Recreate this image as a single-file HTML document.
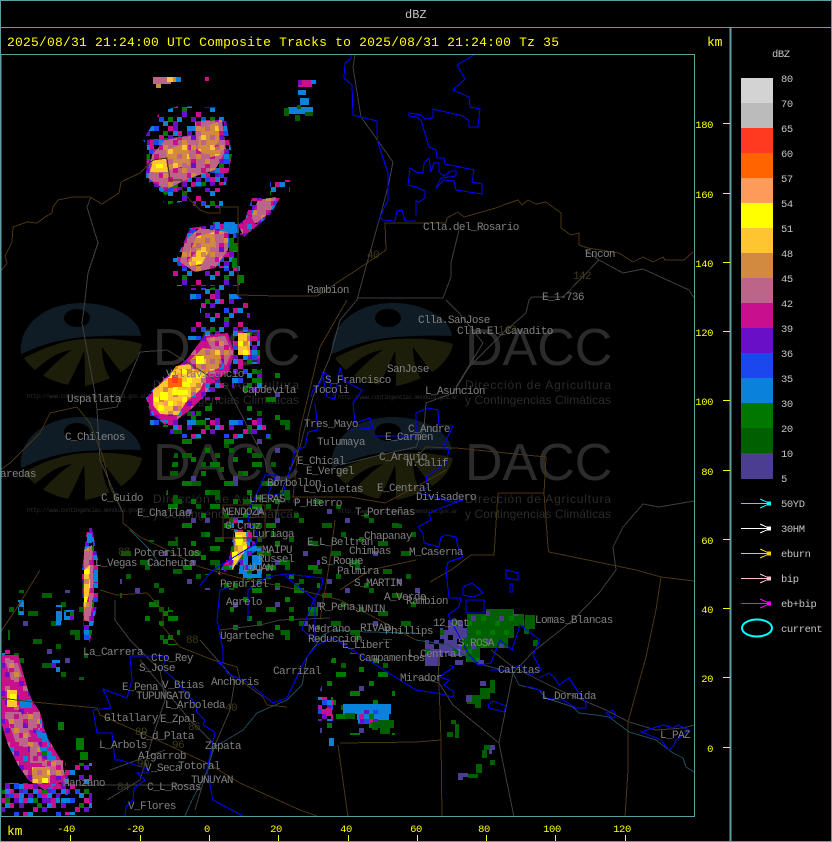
<!DOCTYPE html>
<html><head><meta charset="utf-8"><title>dBZ</title>
<style>
html,body{margin:0;padding:0;background:#000;width:832px;height:842px;overflow:hidden}
svg{display:block}
text{font-family:"Liberation Mono",monospace;font-size:11px;letter-spacing:-.62px}
.m text{fill:#808080}
.d text{fill:#3f3a1c}
.y text{fill:#ff0;font-size:10.5px;letter-spacing:-.4px}
.g text{fill:#c4c4c4;font-size:10.5px;letter-spacing:-.4px}
.w text{fill:#2b2b2b;font-family:"Liberation Sans",sans-serif;letter-spacing:0}
.u text{fill:#2b2b2b;font-size:6px;letter-spacing:0}
.t text{fill:#ff0;font-size:13px;letter-spacing:0}
.e *{shape-rendering:crispEdges}
</style></head><body>
<svg xmlns="http://www.w3.org/2000/svg" width="832" height="842" viewBox="0 0 832 842">
<defs>
<clipPath id="pl"><rect x="1" y="55" width="693" height="761"/></clipPath>
<pattern id="pC" patternUnits="userSpaceOnUse" width="28" height="28"><path fill="#c8108c" d="M0 0h5v5h-5zM23 0h5v5h-5zM9 5h5v5h-5zM14 9h5v5h-5zM23 14h5v5h-5zM5 19h5v5h-5zM14 23h5v5h-5z"/><path fill="#6a0fc8" d="M5 0h5v5h-5zM19 5h5v5h-5zM0 9h5v5h-5zM14 14h5v5h-5zM9 19h5v5h-5zM23 19h5v5h-5zM5 23h5v5h-5z"/><path fill="#1c46ee" d="M14 0h5v5h-5zM23 5h5v5h-5zM9 9h5v5h-5zM0 19h5v5h-5z"/><path fill="#0a82dc" d="M19 0h5v5h-5zM5 5h5v5h-5zM19 9h5v5h-5zM0 14h5v5h-5zM19 19h5v5h-5zM9 23h5v5h-5z"/><path fill="#007800" d="M5 14h5v5h-5zM23 23h5v5h-5z"/></pattern>
<pattern id="pF" patternUnits="userSpaceOnUse" width="42" height="42"><path fill="#c8108c" d="M0 0h5v5h-5zM9 5h5v5h-5zM33 9h5v5h-5zM23 14h5v5h-5zM5 19h5v5h-5zM28 28h5v5h-5z"/><path fill="#6a0fc8" d="M5 0h5v5h-5zM19 5h5v5h-5zM0 9h5v5h-5zM37 19h5v5h-5zM14 28h5v5h-5zM23 33h5v5h-5zM5 37h5v5h-5z"/><path fill="#1c46ee" d="M28 0h5v5h-5zM14 14h5v5h-5zM33 33h5v5h-5z"/><path fill="#0a82dc" d="M19 0h5v5h-5zM23 0h5v5h-5zM5 5h5v5h-5zM28 14h5v5h-5zM0 23h5v5h-5zM19 19h5v5h-5zM9 33h5v5h-5zM37 37h5v5h-5z"/><path fill="#007800" d="M37 5h5v5h-5zM14 23h5v5h-5zM0 33h5v5h-5z"/></pattern>
<pattern id="pB" patternUnits="userSpaceOnUse" width="28" height="28"><rect width="28" height="28" fill="#bb6688"/><path fill="#c8108c" d="M5 0h5v5h-5zM19 5h5v5h-5zM0 9h5v5h-5zM14 14h5v5h-5zM23 19h5v5h-5zM9 23h5v5h-5z"/><path fill="#d18a3e" d="M14 0h5v5h-5zM0 14h5v5h-5zM9 19h5v5h-5zM23 5h5v5h-5z"/><path fill="#6a0fc8" d="M23 23h5v5h-5z"/></pattern>
<pattern id="pM" patternUnits="userSpaceOnUse" width="28" height="28"><rect width="28" height="28" fill="#c8108c"/><path fill="#6a0fc8" d="M5 0h5v5h-5zM19 9h5v5h-5zM0 19h5v5h-5zM14 23h5v5h-5z"/><path fill="#bb6688" d="M14 5h5v5h-5zM5 14h5v5h-5zM23 14h5v5h-5zM9 23h5v5h-5z"/><path fill="#0a82dc" d="M23 0h5v5h-5zM9 19h5v5h-5z"/></pattern>
<pattern id="pA" patternUnits="userSpaceOnUse" width="28" height="28"><rect width="28" height="28" fill="#fdc530"/><path fill="#d18a3e" d="M5 0h5v5h-5zM19 5h5v5h-5zM9 14h5v5h-5zM0 19h5v5h-5zM23 23h5v5h-5z"/><path fill="#ff0" d="M14 5h5v5h-5zM0 9h5v5h-5zM19 14h5v5h-5zM5 23h5v5h-5z"/><path fill="#ff9b5a" d="M9 9h5v5h-5zM23 9h5v5h-5zM14 19h5v5h-5z"/><path fill="#bb6688" d="M23 0h5v5h-5zM5 14h5v5h-5z"/></pattern>
<pattern id="pO" patternUnits="userSpaceOnUse" width="28" height="28"><rect width="28" height="28" fill="#d18a3e"/><path fill="#bb6688" d="M5 0h5v5h-5zM19 5h5v5h-5zM9 14h5v5h-5zM0 19h5v5h-5zM23 23h5v5h-5zM14 23h5v5h-5z"/><path fill="#fdc530" d="M14 5h5v5h-5zM0 9h5v5h-5zM19 14h5v5h-5zM5 23h5v5h-5z"/><path fill="#c8108c" d="M23 0h5v5h-5z"/></pattern>
<pattern id="pL" patternUnits="userSpaceOnUse" width="28" height="28"><path fill="#0a82dc" d="M0 0h5v5h-5zM5 0h5v5h-5zM9 0h5v5h-5zM19 0h5v5h-5zM0 5h5v5h-5zM9 5h5v5h-5zM14 5h5v5h-5zM23 5h5v5h-5zM5 9h5v5h-5zM14 9h5v5h-5zM19 9h5v5h-5zM0 14h5v5h-5zM5 14h5v5h-5zM19 14h5v5h-5zM23 14h5v5h-5zM9 19h5v5h-5zM14 19h5v5h-5zM0 23h5v5h-5zM5 23h5v5h-5zM19 23h5v5h-5z"/><path fill="#6a0fc8" d="M14 0h5v5h-5zM19 5h5v5h-5zM9 14h5v5h-5zM23 19h5v5h-5z"/><path fill="#007800" d="M23 9h5v5h-5zM5 19h5v5h-5zM14 23h5v5h-5z"/></pattern>
<pattern id="pG" patternUnits="userSpaceOnUse" width="28" height="28"><path fill="#007800" d="M0 0h5v5h-5zM5 0h5v5h-5zM19 5h5v5h-5zM9 14h5v5h-5zM14 14h5v5h-5zM0 19h5v5h-5zM23 23h5v5h-5z"/><path fill="#005f00" d="M14 9h5v5h-5zM19 19h5v5h-5z"/></pattern>
<pattern id="pS" patternUnits="userSpaceOnUse" width="42" height="42"><path fill="#007800" d="M0 0h5v5h-5zM5 0h5v5h-5zM33 9h5v5h-5zM14 19h5v5h-5zM19 19h5v5h-5zM37 28h5v5h-5zM23 37h5v5h-5z"/><path fill="#005f00" d="M5 33h5v5h-5z"/><path fill="#4b3d8f" d="M23 14h5v5h-5z"/></pattern>
<pattern id="pT" patternUnits="userSpaceOnUse" width="70" height="70"><path fill="#005f00" d="M0 0h5v5h-5zM5 0h5v5h-5zM5 5h5v5h-5zM33 9h5v5h-5zM37 9h5v5h-5zM56 14h5v5h-5zM14 23h5v5h-5zM19 28h5v5h-5zM42 33h5v5h-5zM47 33h5v5h-5zM61 42h5v5h-5zM9 47h5v5h-5zM28 51h5v5h-5zM33 51h5v5h-5zM51 61h5v5h-5zM56 61h5v5h-5z"/><path fill="#4b3d8f" d="M65 28h5v5h-5zM23 61h5v5h-5zM47 19h5v5h-5z"/></pattern>
<pattern id="pD" patternUnits="userSpaceOnUse" width="28" height="28"><rect width="28" height="28" fill="#005f00"/><path fill="#007800" d="M5 0h5v5h-5zM19 5h5v5h-5zM0 14h5v5h-5zM14 14h5v5h-5z"/><path fill="#4b3d8f" d="M23 0h5v5h-5zM9 23h5v5h-5z"/></pattern>
<pattern id="pV" patternUnits="userSpaceOnUse" width="28" height="28"><rect width="28" height="28" fill="#4b3d8f"/><path fill="#005f00" d="M5 5h5v5h-5zM19 14h5v5h-5z"/><path fill="#000" d="M14 0h5v5h-5zM23 9h5v5h-5zM9 23h5v5h-5zM0 19h5v5h-5zM19 23h5v5h-5z"/></pattern>
<g id="logo"><path fill="#0f1b25" d="M21 354C18 325 45 303 82 303C115 303 140 320 141 336C120 335 100 336 85 337C60 339 40 345 24 353Z"/><ellipse cx="77" cy="318" rx="13" ry="9" fill="#000"/><path fill="#1d1e0a" d="M24 358C45 347 65 340 85 339C105 338 125 339 142 344C138 365 115 380 85 386C60 387 35 375 24 358Z"/><path fill="#000" d="M35 370C45 362 55 352 72 350C60 358 50 368 42 377ZM84 351C78 365 72 378 66 388L85 388C85 372 85 360 84 351ZM102 347C102 365 108 378 115 384L125 377C115 365 108 355 102 347Z"/></g>
</defs>

<g class="w" clip-path="url(#pl)">
<use href="#logo"/><use href="#logo" x="311"/><use href="#logo" y="114"/><use href="#logo" x="311" y="114"/>
<text x="153" y="365" style="font-size:52px">DACC</text>
<text x="465" y="365" style="font-size:52px">DACC</text>
<text x="153" y="480" style="font-size:52px">DACC</text>
<text x="465" y="480" style="font-size:52px">DACC</text>
<text x="153" y="389" textLength="146" style="font-size:12px">Dirección de Agricultura</text>
<text x="153" y="404" textLength="146" style="font-size:12px">y Contingencias Climáticas</text>
<text x="465" y="389" textLength="146" style="font-size:12px">Dirección de Agricultura</text>
<text x="465" y="404" textLength="146" style="font-size:12px">y Contingencias Climáticas</text>
<text x="153" y="503" textLength="146" style="font-size:12px">Dirección de Agricultura</text>
<text x="153" y="518" textLength="146" style="font-size:12px">y Contingencias Climáticas</text>
<text x="465" y="503" textLength="146" style="font-size:12px">Dirección de Agricultura</text>
<text x="465" y="518" textLength="146" style="font-size:12px">y Contingencias Climáticas</text>
</g>
<g class="u">
<text x="27" y="398" textLength="120">http://www.contingencias.mendoza.gov.ar</text>
<text x="338" y="399" textLength="120">http://www.contingencias.mendoza.gov.ar</text>
<text x="27" y="512" textLength="120">http://www.contingencias.mendoza.gov.ar</text>
<text x="338" y="513" textLength="120">http://www.contingencias.mendoza.gov.ar</text>
</g>

<g class="e" clip-path="url(#pl)">
<!-- sparse echoes -->
<path fill="url(#pT)" d="M170 420h120v170h-120z"/>
<path fill="url(#pS)" d="M180 425L240 425L280 470V575H185L165 500Z"/>
<path fill="url(#pF)" d="M200 290L225 285L250 305V335H200ZM170 418h100v20h-100zM232 362h30v30h-30z"/>
<path fill="url(#pS)" d="M240 370h45v50h-45z"/>
<path fill="url(#pG)" d="M186 403h26v22h-26z"/>
<path fill="url(#pT)" d="M290 490L420 530V640H280Z"/>
<path fill="url(#pS)" d="M230 560h90v70h-90z"/>
<path fill="url(#pG)" d="M145 600h24v25h-24zM160 610h20v35h-20z"/>
<path fill="url(#pT)" d="M8 590h80v90h-80z"/>
<path fill="url(#pL)" d="M18 600h6v15h-6zM56 605h6v20h-6zM64 610h10v10h-10zM52 660h8v12h-8z"/>
<path fill="url(#pS)" d="M335 650L395 660V735H320V690Z"/>
<path fill="url(#pT)" d="M120 540h50v60h-50z"/>
<!-- top -->
<rect x="153" y="77" width="18" height="7" fill="#bb6688"/><rect x="167" y="77" width="6" height="5" fill="#fdc530"/><rect x="173" y="77" width="5" height="5" fill="#d18a3e"/><rect x="176" y="77" width="5" height="5" fill="#0a82dc"/><rect x="156" y="84" width="5" height="4" fill="#d18a3e"/><rect x="205" y="77" width="4" height="4" fill="#c8108c"/>
<path fill="#c8108c" d="M298 80h14v7h-14z"/><path fill="#6a0fc8" d="M298 80h4v5h-4z"/><path fill="#0a82dc" d="M311 80h5v4h-5zM298 90h8v5h-8zM300 98h9v7h-9zM288 107h25v7h-25z"/><path fill="#005f00" d="M284 108h5v8h-5zM297 105h4v4h-4zM295 115h5v6h-5zM305 112h8v4h-8z"/>
<!-- storm 1 -->
<path fill="url(#pF)" d="M160 112L178 106L222 108L226 130H195V142L150 150L143 140ZM150 177L190 175L192 200L165 205ZM193 188h30v20h-30z"/>
<path fill="url(#pC)" d="M195 120H226L232 155L226 185L190 187L165 195L146 180L147 140L195 135Z"/>
<path fill="url(#pB)" d="M195 122L222 120L226 150L215 170L190 178L165 190L148 178L152 155L165 140L195 135Z"/>
<path fill="url(#pO)" d="M200 128L218 122L220 140L206 155L198 150Z"/>
<path fill="url(#pO)" d="M166 150L188 143L190 165L168 170Z"/>
<path fill="url(#pO)" d="M206 148L222 146L220 155L206 158Z"/>
<path fill="#fdc530" d="M153 160L166 158L168 172L150 172Z"/><path fill="#ff0" d="M156 164h7v4h-7z"/>
<!-- storm 2 -->
<path fill="url(#pF)" d="M173 258h67v28h-67zM190 288h30v12h-30zM270 180h20v15h-20z"/>
<path fill="url(#pC)" d="M175 262L190 228L235 222L238 250L228 268H180ZM240 235L252 198H280L270 215L250 232Z"/>
<path fill="url(#pL)" d="M213 222h26v11h-26z"/>
<path fill="url(#pB)" d="M180 262L185 240L200 228L228 232L228 250L215 268L195 272Z"/>
<path fill="url(#pO)" d="M188 255L197 236L214 232L216 248L197 262Z"/>
<path fill="url(#pA)" d="M188 260L198 250L208 252L202 264L190 266Z"/>
<path fill="url(#pB)" d="M252 215L258 200L276 197L270 212L258 222L245 228Z"/>
<path fill="url(#pM)" d="M238 225L250 215L256 225L244 237Z"/>
<path fill="#007800" d="M230 243h7v8h-7zM237 275h7v8h-7zM232 258h5v10h-5z"/>
<!-- storm 3 -->
<path fill="url(#pF)" d="M150 395h45v32h-45zM198 375h26v25h-26zM188 320h20v20h-20z"/>
<path fill="url(#pC)" d="M146 398L162 378L182 364L208 375L210 392L186 412L165 425L150 412Z"/>
<path fill="url(#pM)" d="M205 335L228 333L234 352L230 370L210 385L205 395L190 410L170 425L152 415L147 398L165 378L188 358Z"/>
<path fill="url(#pB)" d="M206 338L225 336L232 352L226 366L212 350Z"/>
<path fill="url(#pA)" d="M153 405L153 390L168 378L176 366L197 363L208 372L200 390L186 402L178 415L160 414Z"/>
<path fill="url(#pO)" d="M190 360L203 348L220 350L222 367L207 372L195 372Z"/>
<path fill="#ff6400" d="M168 378h14v9h-14z"/><path fill="#ff3a20" d="M172 375h6v8h-6z"/>
<path fill="#ff0" d="M172 390h16v5h-16zM160 392h8v8h-8zM182 382h8v5h-8zM196 356h8v8h-8zM158 405h6v5h-6z"/>
<path fill="url(#pC)" d="M233 330h27v34h-27z"/>
<path fill="url(#pA)" d="M238 333h12v22h-12z"/>
<!-- mendoza -->
<path fill="url(#pF)" d="M232 520h18v30h-18z"/>
<path fill="url(#pC)" d="M234 530H250L258 550L215 578L230 555Z"/>
<path fill="url(#pL)" d="M242 548L262 548L262 578L238 578Z"/>
<path fill="url(#pA)" d="M235 532L246 532L247 548L232 570L234 552Z"/>
<path fill="#ff0" d="M236 535h6v10h-6zM232 552h6v8h-6z"/>
<!-- west strip -->
<path fill="url(#pC)" d="M87 528L92 528L98 560L98 600L90 642L84 642L82 570Z"/>
<path fill="url(#pB)" d="M84 550L92 545L94 590L90 622L84 620Z"/>
<path fill="url(#pA)" d="M84 570L90 565L90 590L84 612Z"/>
<path fill="#0a82dc" d="M87 533h5v10h-5zM94 570h4v12h-4z"/>
<!-- SW storm -->
<path fill="url(#pF)" d="M2 790h63v26h-63zM2 650h10v15h-10zM65 763h27v52h-27z"/>
<path fill="url(#pC)" d="M2 660h6v55h-6zM60 775h8v20h-8zM5 783h55v20h-55z"/>
<path fill="url(#pM)" d="M2 655L18 655L28 690L32 700L40 712L46 735L62 762L66 780L45 790L28 780L18 765L8 745L2 725Z"/>
<path fill="url(#pB)" d="M5 660h12l6 20h-12zM5 712h16l14 34h-18zM27 712h13v18h-13zM45 760h18v16h-18zM30 745h12v18h-12z"/>
<path fill="url(#pL)" d="M36 730L46 732L54 762L42 758Z"/><path fill="#0a82dc" d="M20 700h12v8h-12z"/>
<path fill="url(#pO)" d="M32 767h18v16h-18z"/><path fill="#fdc530" d="M7 690h10v17h-10z"/>
<path fill="#ff0" d="M10 694h6v7h-6zM42 778h6v5h-6z"/>
<path fill="#007800" d="M76 738h8v12h-8zM80 752h8v8h-8zM58 722h6v8h-6z"/>
<!-- south centre -->
<path fill="url(#pC)" d="M318 697h15v24h-15z"/>
<path fill="#c8108c" d="M326 708h6v8h-6z"/>
<path fill="#0a82dc" d="M343 704h48v10h-48zM357 712h32v8h-32zM329 738h5v8h-5z"/>
<path fill="url(#pC)" d="M358 710h20v14h-20z"/>
<path fill="#005f00" d="M345 713h10v6h-10zM378 720h16v8h-16zM380 728h10v6h-10zM372 722h6v8h-6z"/>
<!-- east -->
<path fill="url(#pV)" d="M440 628h27v28h-27zM425 640h15v26h-15zM448 620h15v8h-15z"/>
<path fill="url(#pD)" d="M467 614h19v-5h28v5h10v12h-10v12h-6v10h-28v14h-14v-12h-4v-12h5z"/>
<path fill="#005f00" d="M525 615h10v14h-6v5h-5zM533 640h5v6h-5z"/>
<path fill="#4b3d8f" d="M455 660h8v5h-8zM478 660h6v5h-6z"/>
<path fill="#005f00" d="M475 695h5v-7h10v-8h5v13h-5v6h-9v9h-6zM467 695h8v9h-8z"/>
<path fill="#4b3d8f" d="M466 695h6v7h-6zM480 681h6v5h-6z"/>
<path fill="#005f00" d="M451 720h5v4h-5zM455 724h4v14h-4zM447 732h6v5h-6zM484 745h10v5h-10zM482 750h5v8h-5zM490 760h5v5h-5zM478 778h-10v-4h10zM476 764h6v9h-6z"/>
<path fill="#4b3d8f" d="M458 773h5v7h-5zM463 773h5v4h-5zM490 745h5v5h-5zM489 750h3v4h-3z"/>
</g>

<g fill="none" clip-path="url(#pl)" stroke-width="1" shape-rendering="crispEdges">
<!-- brown -->
<g stroke="#4a3512">
<path d="M0 272L7 263L5 256L12 242L13 227L27 222L37 223L45 217L52 213L53 207L58 200L72 197L90 197L102 204L119 193L121 182L140 173L153 160L167 158L170 180L182 180L182 190L190 200L200 210L208 213L220 213L220 207L238 207L238 295L278 296L317 296L367 263L386 250L385 223L446 223L447 218L458 212L464 217L496 208L506 204L518 200L522 205L528 200L536 204L546 202L561 213L561 228L571 235L579 233L579 245L588 248L619 253L633 262L643 257L653 262L663 257L665 260L684 260L693 252"/>
<path d="M416 457L426 447L456 448L546 457L544 493L548 547L549 552L636 570L661 577L694 581"/>
<path d="M498 493L544 493M498 493L494 555L471 555L451 570L430 582"/>
<path d="M661 577L656 610L646 657L636 693L628 722L628 770L625 817"/>
<path d="M438 657L441 740L442 817M416 742L441 740M340 743L416 742M338 745L348 817"/>
<path d="M0 698L33 702L97 708L100 715L157 740L207 763L240 783L300 810L317 816"/>
<path d="M100 590L117 595L147 593L163 610L163 627L180 647L213 660L237 667L240 680L263 697L267 705L287 707"/>
<path d="M0 633L20 603L40 570"/>
<path d="M77 407L50 413L40 433L10 463L0 470M77 407L90 423L103 457L110 487L123 513L123 523L140 537L167 550L200 567L240 578L300 590L340 600L370 615L416 640"/>
<path d="M223 505H265V538H223ZM223 518L265 517"/>
<path d="M347 300L320 347L300 430L293 497L350 497L385 503L416 487L446 470M265 510H293M335 520L330 560L320 620M416 560L370 570L340 590"/>
</g>
<!-- gray -->
<g stroke="#3e3e3e">
<path d="M355 55L353 67L361 117L393 162L388 187L380 217L367 263L357 300L340 320L330 357L313 397L300 447L283 487L275 520"/>
<path d="M91 197L87 207L98 243L88 273L85 300L82 323L95 393L97 410L100 460L110 483L123 513"/>
<path d="M140 352L167 350L227 387L265 460L267 473M97 410L117 407L140 352M357 298L443 298L451 277L451 263L459 230"/>
<path d="M694 298L689 290L643 269L623 273L599 260L563 297L532 297L529 300L526 313L503 333L486 350L469 367L453 393L426 403L424 427L416 447L380 455L340 465"/>
<path d="M446 300L459 313L483 343L456 387M599 260L585 250"/>
<path d="M694 501L659 507L643 504L623 527L613 547L616 570L599 593L573 620L533 652L513 673L499 743L514 817"/>
<path d="M491 650L513 667L559 690L606 710L629 722L656 730L683 728L694 725"/>
<path d="M416 677L439 683L453 705L499 743"/>
<path d="M220 630L260 625L280 620L330 618M115 600L115 620L130 640L160 670L165 700L155 730L140 780L107 800M200 640L235 680L230 710L215 745L207 770L195 810M60 785L195 785M140 660L190 720L215 745M110 770L165 750"/>
</g>
<!-- teal -->
<g stroke="#1f4a58">
<path d="M416 633L367 632L333 630L323 635L307 657L302 685L287 700L257 713L243 730L213 748L208 770L192 800L185 816"/>
<path d="M416 640L449 645L476 663L513 673L519 685L539 690L546 698L573 707L579 713L596 715L609 717L629 732L656 740L673 753L683 758L686 767L694 772"/>
<path d="M130 530L150 550L160 565"/>
</g>
<!-- blue -->
<g stroke="#00f">
<path d="M351 55L351 59L345 63L344 78L352 85L353 115L377 121L377 133L378 143L388 173L388 200L380 217L383 220L395 221L397 211L402 210L405 221L416 221"/>
<path d="M474 55L457 65L465 79L453 90L469 97L470 107L480 109L478 127L469 127L469 121L463 116L433 109L433 118L425 119L421 115L416 114L409 113L409 116L416 117L421 120L429 147L436 150L437 158L444 158L445 164L474 170L472 182L482 184L482 194L456 190L454 181L444 180L436 188L441 178L456 176L456 171L451 171L444 176L439 172L439 163L434 163L431 172L429 158L424 163L423 173L416 172L410 168L408 185L416 187L425 191L425 198L419 202L416 201L416 215"/>
<path d="M340 367L343 380L362 390L353 403L355 423L370 418L373 428L350 430M373 436L416 436L416 413L428 408L438 410L439 425L453 426L443 447L449 450L446 463L426 477L428 487L418 493L453 502L463 500L449 505L429 513L431 520L418 527L423 533L424 543L439 547L441 537L446 535L456 537L458 547L463 557L448 562L446 570L449 598L461 598L459 607L448 615L468 653L478 665L491 663L500 640L512 650L520 625L540 640L533 655L541 670L530 675L520 665L510 670L490 670"/>
<path d="M325 372L320 383L313 390L311 397M322 372L327 397L335 399L328 377L325 372M340 367L335 399"/>
<path d="M315 403L318 430L308 432L305 447L295 450L292 463L287 480L283 493L267 497L276 475L265 475L260 487L250 507L248 520L257 533L257 543L213 570L200 585"/>
<path d="M466 600H484V613H466ZM463 587L472 583L480 590L483 593L473 597L463 595ZM506 570L518 573V580L506 578ZM510 584H513V592H510Z"/>
<path d="M539 678L549 673L554 677L559 685L569 678L577 690L586 703L586 708L576 708L563 700L543 698L544 692L531 687L525 687M606 713L613 710L616 715L613 718ZM641 732L653 728L664 725L673 728L678 725L689 730L676 740L673 747L669 750L661 740L649 735ZM488 705L493 701L506 706L504 712L489 708Z"/>
<path d="M449 665L454 667L439 677L449 680L444 685L454 692L453 697L436 693L416 690L333 638L317 645L313 650L306 658L293 685L287 698L273 703L247 682L227 673L225 667L218 663L223 662L223 650L217 620L220 590L227 588"/>
<path d="M248 620L248 590L267 577L285 574L323 578L322 585L313 602L302 629L315 642L315 600L290 580L285 575"/>
<path d="M130 656L132 680L127 698L103 689L107 698L111 708L93 710L97 733L112 733L115 760L120 760L148 769L148 773L137 773L145 780L134 788L133 800L126 807L125 816"/>
<path d="M130 656L167 656L162 668L173 678L195 703L197 712L205 720L203 725L215 732L207 770L213 800L243 816"/>
</g>
</g>

<g class="m">
<text x="423" y="230">Clla.del_Rosario</text>
<text x="585" y="257">Encon</text>
<text x="542" y="300">E_1-736</text>
<text x="307" y="293">Rambion</text>
<text x="418" y="323">Clla.SanJose</text>
<text x="457" y="334">Clla.El_Cavadito</text>
<text x="387" y="372">SanJose</text>
<text x="325" y="383">S_Francisco</text>
<text x="313" y="393">Tocoli</text>
<text x="425" y="394">L_Asuncion</text>
<text x="166" y="377">Villavicencio</text>
<text x="242" y="393">Capdevila</text>
<text x="67" y="402">Uspallata</text>
<text x="304" y="427">Tres_Mayo</text>
<text x="408" y="432">C_Andre</text>
<text x="385" y="440">E_Carmen</text>
<text x="317" y="445">Tulumaya</text>
<text x="65" y="440">C_Chilenos</text>
<text x="379" y="460">C_Araujo</text>
<text x="297" y="464">E_Chical</text>
<text x="406" y="466">N.Calif</text>
<text x="306" y="474">E_Vergel</text>
<text x="303" y="492">L_Violetas</text>
<text x="377" y="491">E_Central</text>
<text x="416" y="500">Divisadero</text>
<text x="0" y="477">aredas</text>
<text x="267" y="486">Borbollon</text>
<text x="101" y="501">C_Guido</text>
<text x="249" y="502">LHERAS</text>
<text x="294" y="506">P_Hierro</text>
<text x="355" y="515">T_Porteñas</text>
<text x="137" y="516">E_Challao</text>
<text x="222" y="515">MENDOZA</text>
<text x="225" y="529">G_Cruz</text>
<text x="252" y="537">Luriaga</text>
<text x="307" y="545">E_L_Beltran</text>
<text x="364" y="539">Chapanay</text>
<text x="262" y="553">MAIPU</text>
<text x="349" y="554">Chimbas</text>
<text x="409" y="555">M_Caserna</text>
<text x="134" y="556">Potrerillos</text>
<text x="95" y="566">L_Vegas</text>
<text x="147" y="566">Cacheuta</text>
<text x="258" y="562">Russel</text>
<text x="321" y="564">S_Roque</text>
<text x="337" y="574">Palmira</text>
<text x="354" y="586">S_MARTIN</text>
<text x="220" y="587">Perdriel</text>
<text x="243" y="571">LUJAN</text>
<text x="226" y="605">Agrelo</text>
<text x="384" y="600">A_Verde</text>
<text x="406" y="604">Rambion</text>
<text x="319" y="610">R_Pena</text>
<text x="355" y="612">JUNIN</text>
<text x="308" y="632">Medrano</text>
<text x="360" y="631">RIVAD</text>
<text x="385" y="634">Phillips</text>
<text x="433" y="626">12_Oct</text>
<text x="308" y="642">Reduccion</text>
<text x="342" y="648">E_Libert</text>
<text x="535" y="623">Lomas_Blancas</text>
<text x="220" y="639">Ugarteche</text>
<text x="458" y="646">S.ROSA</text>
<text x="408" y="657">L_Central</text>
<text x="359" y="661">Campamentos</text>
<text x="498" y="673">Catitas</text>
<text x="83" y="655">La_Carrera</text>
<text x="151" y="661">Cto_Rey</text>
<text x="139" y="671">S_Jose</text>
<text x="273" y="674">Carrizal</text>
<text x="211" y="685">Anchoris</text>
<text x="400" y="681">Mirador</text>
<text x="122" y="690">E_Pena</text>
<text x="162" y="688">V_Btias</text>
<text x="136" y="699">TUPUNGATO</text>
<text x="165" y="708">L_Arboleda</text>
<text x="542" y="699">L_Dormida</text>
<text x="104" y="721">Gltallary</text>
<text x="160" y="722">E_Zpal</text>
<text x="140" y="739">C_d_Plata</text>
<text x="99" y="748">L_Arbols</text>
<text x="205" y="749">Zapata</text>
<text x="138" y="759">Algarrob</text>
<text x="660" y="738">L_PAZ</text>
<text x="145" y="771">V_Seca</text>
<text x="178" y="769">Totoral</text>
<text x="191" y="783">TUNUYAN</text>
<text x="63" y="786">Manzano</text>
<text x="147" y="790">C_L_Rosas</text>
<text x="128" y="809">V_Flores</text>
</g>
<g class="d">
<text x="573" y="279">142</text><text x="367" y="258">40</text><text x="498" y="333">143</text>
<text x="118" y="555">88</text><text x="186" y="643">88</text><text x="225" y="711">40</text>
<text x="135" y="735">89</text><text x="188" y="730">86</text><text x="172" y="748">96</text><text x="137" y="767">90</text><text x="117" y="790">84</text>
</g>

<!-- frame -->
<g stroke="#5f9ea0" fill="none" shape-rendering="crispEdges">
<rect x="1" y="54.5" width="693.5" height="762" stroke-width="1"/>
<path d="M0 .5H832M0 27.5H832" stroke-width="1"/>
<path d="M.5 0V842M831.5 0V842" stroke-width="1"/>
<path d="M730.5 28V842" stroke-width="2"/>
<path d="M0 841.5H832"/>
</g>

<g class="t"><text x="7" y="46" textLength="552">2025/08/31 21:24:00 UTC Composite Tracks to 2025/08/31 21:24:00 Tz 35</text></g>
<g class="y"><text x="707" y="46" style="font-size:13px;letter-spacing:-.2px">km</text><text x="7" y="835" style="font-size:13px;letter-spacing:-.2px">km</text></g>
<g class="g"><text x="405" y="18" style="font-size:12px;letter-spacing:0">dBZ</text><text x="772" y="57">dBZ</text></g>

<!-- axes -->
<g stroke="#ff0" shape-rendering="crispEdges">
<path d="M723 123.5h7M723 193.5h7M723 262.5h7M723 331.5h7M723 400.5h7M723 470.5h7M723 539.5h7M723 608.5h7M723 677.5h7M723 747.5h7"/>
<path d="M70.5 835v6M140.5 835v6M209.5 835v6M278.5 835v6M348.5 835v6M417.5 835v6M486.5 835v6M555.5 835v6M625.5 835v6"/>
</g>
<g class="y" text-anchor="end">
<text x="713" y="128">180</text><text x="713" y="198">160</text><text x="713" y="267">140</text><text x="713" y="336">120</text><text x="713" y="405">100</text><text x="713" y="475">80</text><text x="713" y="544">60</text><text x="713" y="613">40</text><text x="713" y="682">20</text><text x="713" y="752">0</text>
</g>
<g class="y" text-anchor="middle">
<text x="66" y="832">-40</text><text x="135" y="832">-20</text><text x="207" y="832">0</text><text x="276" y="832">20</text><text x="346" y="832">40</text><text x="416" y="832">60</text><text x="484" y="832">80</text><text x="552" y="832">100</text><text x="622" y="832">120</text>
</g>

<!-- colour bar -->
<g shape-rendering="crispEdges">
<rect x="741" y="78" width="32" height="25" fill="#d3d3d3"/>
<rect x="741" y="103" width="32" height="25" fill="#bbb"/>
<rect x="741" y="128" width="32" height="25" fill="#ff3a20"/>
<rect x="741" y="153" width="32" height="25" fill="#ff6400"/>
<rect x="741" y="178" width="32" height="25" fill="#ff9b5a"/>
<rect x="741" y="203" width="32" height="25" fill="#ff0"/>
<rect x="741" y="228" width="32" height="25" fill="#fdc530"/>
<rect x="741" y="253" width="32" height="25" fill="#d18a3e"/>
<rect x="741" y="278" width="32" height="25" fill="#bb6688"/>
<rect x="741" y="303" width="32" height="25" fill="#c8108c"/>
<rect x="741" y="328" width="32" height="25" fill="#6a0fc8"/>
<rect x="741" y="353" width="32" height="25" fill="#1c46ee"/>
<rect x="741" y="378" width="32" height="25" fill="#0a82dc"/>
<rect x="741" y="403" width="32" height="25" fill="#007800"/>
<rect x="741" y="428" width="32" height="25" fill="#005f00"/>
<rect x="741" y="453" width="32" height="26" fill="#4b3d8f"/>
</g>
<g class="g">
<text x="781" y="82">80</text><text x="781" y="107">70</text><text x="781" y="132">65</text><text x="781" y="157">60</text><text x="781" y="182">57</text><text x="781" y="207">54</text><text x="781" y="232">51</text><text x="781" y="257">48</text><text x="781" y="282">45</text><text x="781" y="307">42</text><text x="781" y="332">39</text><text x="781" y="357">36</text><text x="781" y="382">35</text><text x="781" y="407">30</text><text x="781" y="432">20</text><text x="781" y="457">10</text><text x="781" y="482">5</text>
<text x="781" y="507">50YD</text><text x="781" y="532">30HM</text><text x="781" y="557">eburn</text><text x="781" y="582">bip</text><text x="781" y="607">eb+bip</text><text x="781" y="632">current</text>
</g>
<g fill="none" shape-rendering="crispEdges">
<path stroke="#0ff" d="M741 503.5H769M760 499L770 503.5L760 508"/>
<path stroke="#fff" d="M741 528.5H769M760 524L770 528.5L760 533"/>
<path stroke="#fc0" d="M741 553.5H769M760 549L770 553.5L760 558"/>
<path stroke="#ffc0cb" d="M741 578.5H769M760 574L770 578.5L760 583"/>
<path stroke="#f0f" d="M741 603.5H769M760 599L770 603.5L760 608"/>
</g>
<path fill="#0ff" d="M767 501.5h4v4h-4z"/><path fill="#fff" d="M767 526.5h4v4h-4z"/><path fill="#fc0" d="M767 551.5h4v4h-4z"/><path fill="#ffc0cb" d="M767 576.5h4v4h-4z"/><path fill="#f0f" d="M767 601.5h4v4h-4z"/>
<ellipse cx="757" cy="628" rx="15" ry="8.5" fill="none" stroke="#0ff" stroke-width="2"/>
</svg>
</body></html>
